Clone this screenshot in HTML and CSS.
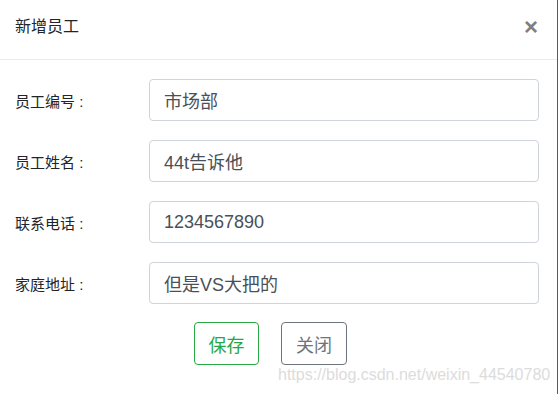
FILE: index.html
```html
<!DOCTYPE html>
<html lang="zh">
<head>
<meta charset="utf-8">
<title>新增员工</title>
<link rel="stylesheet" href="styles.css">
</head>
<body>
<div class="modal">
  <div class="modal-header">
    <h4 class="modal-title">新增员工</h4>
    <span class="close">×</span>
  </div>
  <form class="modal-body">
    <div class="row">
      <label class="label">员工编号 :</label>
      <input class="field" type="text" value="市场部">
    </div>
    <div class="row">
      <label class="label">员工姓名 :</label>
      <input class="field" type="text" value="44t告诉他">
    </div>
    <div class="row">
      <label class="label">联系电话 :</label>
      <input class="field" type="text" value="1234567890">
    </div>
    <div class="row">
      <label class="label">家庭地址 :</label>
      <input class="field" type="text" value="但是VS大把的">
    </div>
    <div class="actions">
      <button type="button" class="btn btn-save">保存</button>
      <button type="button" class="btn btn-close">关闭</button>
    </div>
  </form>
  <div class="watermark">https://blog.csdn.net/weixin_44540780</div>
</div>
</body>
</html>
```
FILE: styles.css
```css
html, body {
  margin: 0;
  padding: 0;
  background: #fff;
}
body {
  font-family: "Liberation Sans", "Noto Sans CJK SC", sans-serif;
  color: #212529;
  width: 559px;
  height: 394px;
  overflow: hidden;
}
.modal {
  position: relative;
  width: 557px;
  height: 394px;
  border-right: 1px solid #5a5a5a;
  box-sizing: content-box;
}
.modal-header {
  height: 60px;
  box-sizing: border-box;
  border-bottom: 1px solid #e9ecef;
  display: flex;
  justify-content: space-between;
  align-items: flex-start;
  padding: 15px 19px 0 15px;
}
.modal-title {
  margin: 0;
  font-size: 16px;
  font-weight: normal;
  line-height: 24px;
  color: #212529;
}
.close {
  font-family: "Liberation Sans", sans-serif;
  font-size: 24px;
  font-weight: bold;
  line-height: 24px;
  color: #808080;
}
.modal-body {
  margin: 0;
  padding: 19px 18px 0 15px;
  display: flex;
  flex-direction: column;
  gap: 19px;
}
.row {
  display: flex;
  align-items: center;
}
.label {
  width: 134px;
  font-size: 15px;
  color: #212529;
  white-space: pre;
}
.field {
  width: 390px;
  height: 42px;
  box-sizing: border-box;
  border: 1px solid #ced4da;
  border-radius: 4px;
  padding: 0 14px;
  font-family: "Liberation Sans", "Noto Sans CJK SC", sans-serif;
  font-size: 18px;
  color: #495057;
  background: #fff;
}
.actions {
  display: flex;
  gap: 22px;
  padding-left: 179px;
  margin-top: -1px;
}
.btn {
  height: 43px;
  box-sizing: border-box;
  padding: 0 13px;
  background: #fff;
  border: 1px solid;
  border-radius: 4px;
  font-family: "Liberation Sans", "Noto Sans CJK SC", sans-serif;
  font-size: 18px;
}
.btn-save {
  width: 65px;
  border-color: #28a745;
  color: #28a745;
}
.btn-close {
  width: 66px;
  border-color: #6c757d;
  color: #6c757d;
}
.watermark {
  position: absolute;
  left: 278px;
  top: 365px;
  font-family: "Liberation Sans", sans-serif;
  font-size: 16px;
  line-height: 20px;
  color: #dcdcdc;
  white-space: nowrap;
}
```
